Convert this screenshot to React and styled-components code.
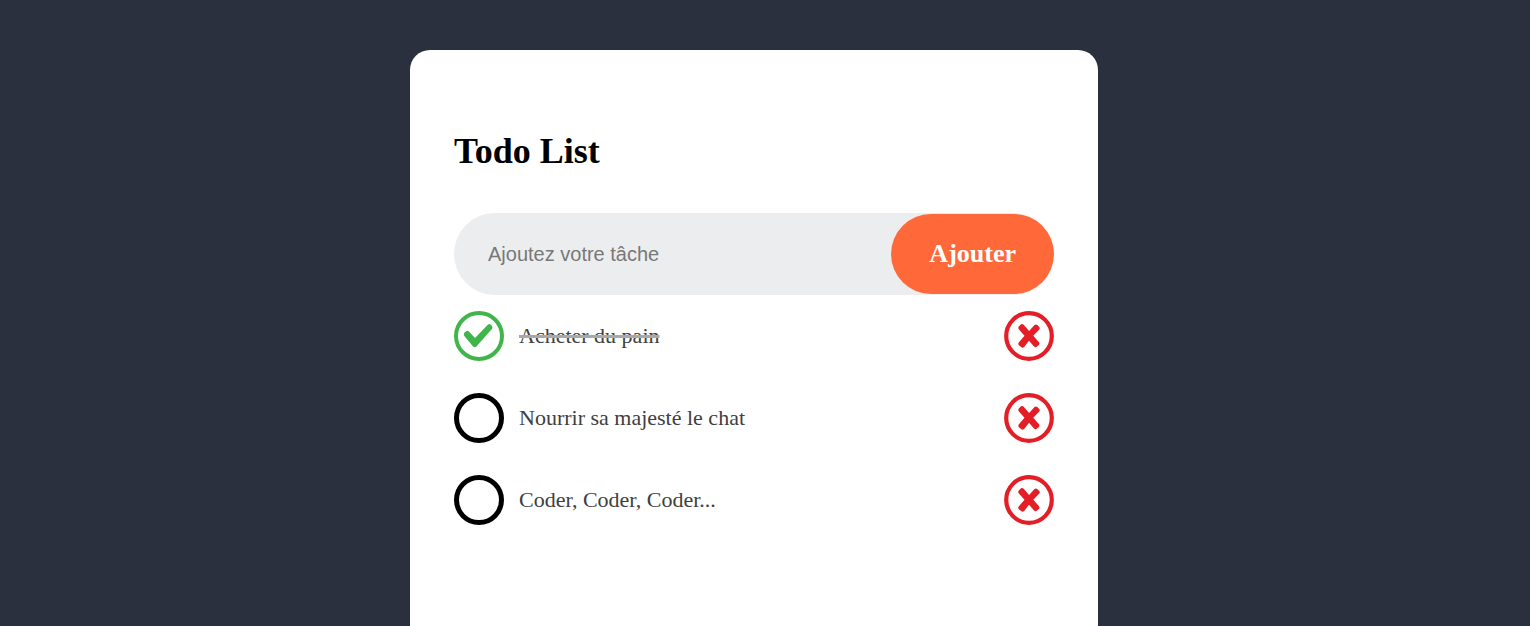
import React, { useState } from "react";
import styled, { createGlobalStyle } from "styled-components";

const GlobalStyle = createGlobalStyle`
  *, *::before, *::after { box-sizing: border-box; }
  body {
    margin: 0;
    background: #2a303e;
    font-family: "Liberation Serif", "Times New Roman", serif;
  }
`;

const Page = styled.div`
  min-height: 100vh;
  display: flex;
  justify-content: center;
  padding: 50px 22px 0 0;
`;

const Card = styled.main`
  width: 100%;
  max-width: 688px;
  padding: 80px 44px;
  background: #fff;
  border-radius: 20px 20px 0 0;
`;

const Title = styled.h1`
  margin: 0 0 40px;
  font-size: 36px;
  line-height: 43px;
  font-weight: 700;
  color: #000;
`;

const Form = styled.form`
  display: flex;
  align-items: center;
  height: 82px;
  background: #ecedef;
  border-radius: 41px;
`;

const TaskInput = styled.input`
  flex: 1;
  min-width: 0;
  height: 100%;
  padding: 0 0 0 34px;
  border: 0;
  outline: 0;
  background: transparent;
  font: 20px "Liberation Sans", Arial, sans-serif;
  color: #333;

  &::placeholder { color: #787878; }
`;

const AddButton = styled.button`
  height: 80px;
  padding: 0 38px;
  border: 0;
  border-radius: 40px;
  background: #ff6838;
  color: #fff;
  font: 700 26px "Liberation Serif", "Times New Roman", serif;
  cursor: pointer;
`;

const List = styled.ul`
  display: grid;
  gap: 32px;
  margin: 16px 0 0;
  padding: 0;
  list-style: none;
`;

const Row = styled.li`
  display: flex;
  align-items: center;
  justify-content: space-between;
`;

const TaskLabel = styled.label`
  display: flex;
  align-items: center;
  gap: 15px;
  cursor: pointer;
`;

const Tick = styled.span`
  display: grid;
  width: 50px;
  height: 50px;

  & > * { grid-area: 1 / 1; }
`;

const Checkbox = styled.input`
  appearance: none;
  width: 50px;
  height: 50px;
  margin: 0;
  border: 5px solid #000;
  border-radius: 50%;
  cursor: pointer;

  &:checked { border: 4px solid #40b54b; }
`;

const Glyph = styled.svg`
  display: block;
  width: 50px;
  height: 50px;
  fill: none;
  pointer-events: none;
`;

const TaskText = styled.span`
  font-size: 22px;
  line-height: 26px;
  color: #404040;
  text-decoration: ${({ $done }) => ($done ? "line-through 3px #a9a9a9" : "none")};
`;

const DeleteButton = styled.button`
  width: 50px;
  height: 50px;
  padding: 0;
  border: 0;
  border-radius: 50%;
  background: transparent;
  cursor: pointer;
`;

const CheckGlyph = () => (
  <Glyph viewBox="0 0 50 50" aria-hidden="true">
    <path
      d="M10.3 24.9 Q9.2 23 10.5 21.5 L12.2 20.2 Q13.7 19.3 15.1 20.7 L21 27 L33.8 13.7 Q35.5 12.4 37 13.7 L38 14.9 Q39.1 16.4 37.9 18 L22.7 35.3 Q20.8 37.1 18.9 35.3 Z"
      fill="#40b54b"
    />
  </Glyph>
);

const CrossGlyph = () => (
  <Glyph viewBox="0 0 50 50" aria-hidden="true">
    <circle cx="25" cy="25" r="22.8" stroke="#e41e26" strokeWidth="4.2" />
    <path
      d="M17 13.2 Q18.5 12.4 19.7 13.8 L25.1 19.9 L30.5 14.1 Q31.8 12.9 33.2 14 L35.3 15.9 Q36.4 17.2 35.3 18.6 L29.3 24.8 L35 31.2 Q36.1 32.6 34.9 33.9 L32.7 35.8 Q31.3 36.7 30 35.4 L25 29.8 L20.2 35.9 Q18.9 37.3 17.4 36.3 L14.9 34.3 Q13.7 33.1 14.7 31.6 L20.5 24.8 L14.7 18.2 Q13.7 16.8 14.8 15.5 Z"
      fill="#e41e26"
    />
  </Glyph>
);

const initialTasks = [
  { id: 1, name: "Acheter du pain", done: true },
  { id: 2, name: "Nourrir sa majesté le chat", done: false },
  { id: 3, name: "Coder, Coder, Coder...", done: false },
];

export default function App() {
  const [tasks, setTasks] = useState(initialTasks);
  const [draft, setDraft] = useState("");

  const addTask = (event) => {
    event.preventDefault();
    if (!draft.trim()) return;
    setTasks([...tasks, { id: Date.now(), name: draft.trim(), done: false }]);
    setDraft("");
  };

  const toggleTask = (id) =>
    setTasks(tasks.map((t) => (t.id === id ? { ...t, done: !t.done } : t)));

  const removeTask = (id) => setTasks(tasks.filter((t) => t.id !== id));

  return (
    <>
      <GlobalStyle />
      <Page>
        <Card>
          <Title>Todo List</Title>
          <Form onSubmit={addTask}>
            <TaskInput
              type="text"
              aria-label="Ajoutez votre tâche"
              placeholder="Ajoutez votre tâche"
              value={draft}
              onChange={(event) => setDraft(event.target.value)}
            />
            <AddButton type="submit">Ajouter</AddButton>
          </Form>
          <List>
            {tasks.map((task) => (
              <Row key={task.id}>
                <TaskLabel>
                  <Tick>
                    <Checkbox
                      type="checkbox"
                      checked={task.done}
                      onChange={() => toggleTask(task.id)}
                    />
                    {task.done && <CheckGlyph />}
                  </Tick>
                  <TaskText $done={task.done}>{task.name}</TaskText>
                </TaskLabel>
                <DeleteButton
                  type="button"
                  aria-label={`Supprimer ${task.name}`}
                  onClick={() => removeTask(task.id)}
                >
                  <CrossGlyph />
                </DeleteButton>
              </Row>
            ))}
          </List>
        </Card>
      </Page>
    </>
  );
}
